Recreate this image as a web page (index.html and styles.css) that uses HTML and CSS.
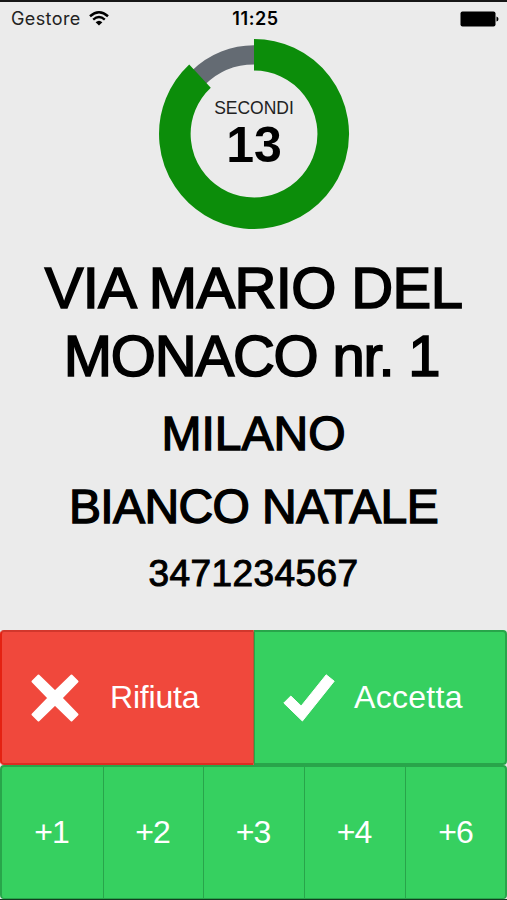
FILE: index.html
```html
<!DOCTYPE html>
<html lang="it">
<head>
    <meta charset="UTF-8">
    <meta name="viewport" content="width=device-width, initial-scale=1.0">
    <title>Gestore</title>
    <link rel="stylesheet" href="styles.css">
</head>
<body>
    <div class="screen">
        <!-- Status bar -->
        <header class="status-bar">
            <div class="carrier">
                <span class="carrier-name">Gestore</span>
                <svg class="wifi" width="20" height="15" viewBox="0 0 20 15">
                    <path d="M1 5.2Q10 -2.6 19 5.2" fill="none" stroke="#000" stroke-width="2.5"/>
                    <path d="M4.2 8.6Q10 3.6 15.8 8.6" fill="none" stroke="#000" stroke-width="2.4"/>
                    <path d="M6.6 11.3Q10 8.3 13.4 11.3L10 14.6Z"/>
                </svg>
            </div>
            <div class="clock">11:25</div>
            <div class="battery">
                <svg width="39" height="16" viewBox="0 0 39 16">
                    <rect x="0.5" y="0.5" width="35" height="15" rx="2"/>
                    <path d="M36.5 5.5Q38.5 6 38.5 8T36.5 10.5Z"/>
                </svg>
            </div>
        </header>

        <!-- Countdown -->
        <div class="countdown">
            <svg class="ring" width="192" height="192" viewBox="0 0 192 192">
                <circle cx="96" cy="96" r="79.2" fill="none" stroke="#646b73" stroke-width="19.2"/>
                <path d="M96 16.8A79.2 79.2 0 1 1 42 38.1" fill="none" stroke="#0c8d0a" stroke-width="31.6"/>
            </svg>
            <div class="countdown-text">
                <div class="countdown-label">SECONDI</div>
                <div class="countdown-value">13</div>
            </div>
        </div>

        <!-- Customer -->
        <main class="customer">
            <h1 class="address"><span class="address-first">VIA MARIO DEL</span><br><span class="address-second">MONACO nr. 1</span></h1>
            <h2 class="city">MILANO</h2>
            <h2 class="name">BIANCO NATALE</h2>
            <p class="phone">3471234567</p>
        </main>

        <!-- Buttons -->
        <div class="actions">
            <button class="btn btn-reject">
                <svg class="icon-cross" width="48" height="48" viewBox="0 0 48 48">
                    <path d="M7.5 1.5L24 17.5L40.5 1.5L46.5 7.5L30.5 24L46.5 40.5L40.5 46.5L24 30.5L7.5 46.5L1.5 40.5L17.5 24L1.5 7.5Z" fill="#fff" stroke="#fff" stroke-width="2" stroke-linejoin="round"/>
                </svg>
                <span class="btn-label">Rifiuta</span>
            </button>
            <button class="btn btn-accept">
                <svg class="icon-check" width="52" height="48" viewBox="0 0 52 48">
                    <path d="M0.8 29L7.8 22L18.2 32L43.2 0.8L51.2 7.2L19.4 47Z" fill="#fff" stroke="#fff" stroke-width="1" stroke-linejoin="round"/>
                </svg>
                <span class="btn-label">Accetta</span>
            </button>
        </div>
        <div class="minutes">
            <button class="btn btn-minute">+1</button>
            <button class="btn btn-minute">+2</button>
            <button class="btn btn-minute">+3</button>
            <button class="btn btn-minute">+4</button>
            <button class="btn btn-minute">+6</button>
        </div>
    </div>
</body>
</html>
```

FILE: styles.css
```css
* {
    box-sizing: border-box;
}
body {
    margin: 0;
    background-color: #ebebeb;
    font-family: "Liberation Sans", Arial, sans-serif;
    color: #000;
}
.screen {
    display: flex;
    flex-direction: column;
    width: 507px;
    height: 900px;
    border-top: 2px solid #161616;
    border-bottom: 1px solid #123d20;
    overflow: hidden;
}
.status-bar {
    display: grid;
    grid-template-columns: 1fr auto 1fr;
    align-items: center;
    height: 32px;
    padding: 0 8px 0 11px;
    font-family: Inter, "Liberation Sans", sans-serif;
    font-size: 18px;
    line-height: 32px;
}
.carrier {
    display: flex;
    align-items: center;
    gap: 8px;
    color: #222;
}
.carrier-name {
    padding-top: 1px;
    letter-spacing: 0.4px;
}
.wifi {
    margin-bottom: 1px;
}
.clock {
    padding: 1px 0 0 1px;
    font-weight: 600;
    letter-spacing: 0.6px;
}
.battery {
    display: flex;
    justify-content: flex-end;
}
.countdown {
    display: grid;
    justify-content: center;
    height: 192px;
    margin: 4px 0 0 1px;
}
.ring,
.countdown-text {
    grid-area: 1 / 1;
}
.countdown-text {
    padding-top: 60px;
    text-align: center;
}
.countdown-label {
    font-size: 17.5px;
    line-height: 20px;
    color: #222;
}
.countdown-value {
    font-size: 50px;
    line-height: 54px;
    font-weight: bold;
}
.customer {
    height: 400px;
    padding-top: 24px;
    text-align: center;
    white-space: nowrap;
}
.address,
.city,
.name,
.phone {
    margin: 0;
    font-weight: normal;
}
.address {
    font-size: 58px;
    line-height: 68px;
    -webkit-text-stroke: 1.7px #000;
}
.address-first {
    letter-spacing: -0.6px;
}
.address-second {
    padding-right: 4px;
    letter-spacing: -1.2px;
}
.city,
.name {
    font-size: 48px;
    line-height: 72px;
    -webkit-text-stroke: 1.4px #000;
}
.city {
    margin-top: 8px;
}
.name {
    margin-top: 1px;
    letter-spacing: -0.6px;
}
.phone {
    font-size: 37px;
    line-height: 62px;
    letter-spacing: 0.4px;
    -webkit-text-stroke: 1px #000;
}
.actions {
    display: grid;
    grid-template-columns: 254px 253px;
    height: 135px;
}
.minutes {
    display: grid;
    grid-template-columns: 104px 100px 101px 101px 101px;
    height: 134px;
}
.btn {
    display: flex;
    align-items: center;
    margin: 0;
    padding: 0;
    border: 1px solid #28a54a;
    background-color: #36d060;
    color: #fff;
    font-family: inherit;
    font-size: 32px;
    cursor: pointer;
}
.btn-reject {
    padding-left: 29px;
    border: 2px solid #dc2d22;
    border-top-color: #d1372c;
    border-left-color: #e42112;
    border-right: 1px solid #b85432;
    border-radius: 4px 0 0 4px;
    background-color: #f0483c;
}
.btn-accept {
    padding-left: 28px;
    border-width: 2px 2px 2px 1px;
    border-radius: 0 4px 4px 0;
}
.btn-reject .btn-label {
    margin-left: 31px;
    letter-spacing: -0.2px;
}
.btn-accept .btn-label {
    margin-left: 19px;
    letter-spacing: 0.3px;
}
.btn-minute {
    justify-content: center;
    padding-right: 2px;
    border-width: 2px 1px 1px 0;
    letter-spacing: -1px;
}
.btn-minute:first-child {
    border-left-width: 2px;
    border-radius: 4px 0 0 4px;
}
.btn-minute:last-child {
    padding-right: 0;
    border-right-width: 2px;
    border-radius: 0 4px 4px 0;
}
```
